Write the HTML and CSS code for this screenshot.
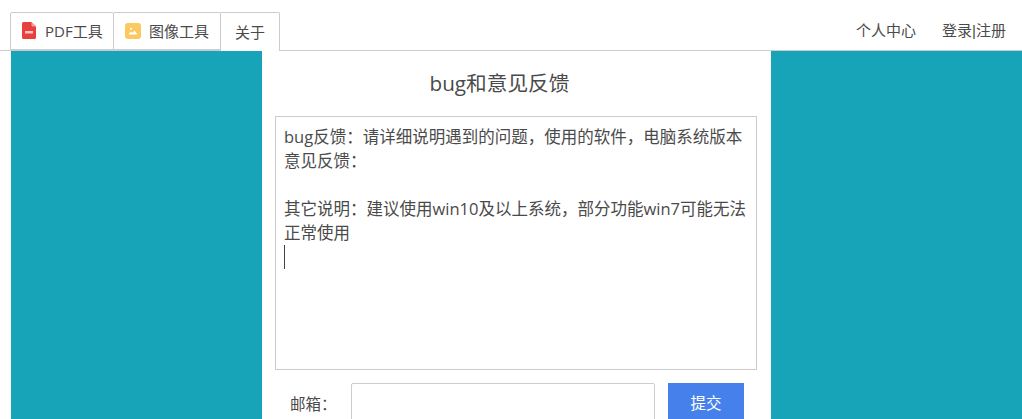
FILE: index.html
```html
<!DOCTYPE html>
<html lang="zh">
<head>
<meta charset="utf-8">
<title>bug和意见反馈</title>
<link rel="stylesheet" href="styles.css">
</head>
<body>
<header class="topbar">
  <nav class="tabs">
    <div class="tab tab-pdf">
      <svg class="tab-icon" viewBox="0 0 14 17" width="14" height="17"><path d="M1.500 0H9.500l4.500 4.500v11a1.500 1.500 0 0 1-1.500 1.500h-11A1.500 1.500 0 0 1 0 15.500v-14A1.500 1.500 0 0 1 1.500 0z" fill="#e8403f"/><path d="M9.500 0L14 4.500H10.500a1 1 0 0 1-1-1z" fill="#f3a09f"/><rect x="3" y="9" width="8" height="2.500" fill="#f8c6c5"/></svg>
      <span>PDF工具</span>
    </div>
    <div class="tab tab-image">
      <svg class="tab-icon" viewBox="0 0 16 16" width="16" height="16"><rect width="16" height="16" rx="3" fill="#fcc860"/><path d="M3.500 11.500l2.500-3 1.500 1.500 2-2.500 3 4z" fill="#fff"/><circle cx="6" cy="5.800" r="1.100" fill="#fff"/></svg>
      <span>图像工具</span>
    </div>
    <div class="tab tab-active"><span>关于</span></div>
  </nav>
  <div class="user-links">
    <span>个人中心</span>
    <span>登录|注册</span>
  </div>
</header>
<main class="stage">
  <section class="panel">
    <h1 class="title">bug和意见反馈</h1>
    <div class="editor">
      <p>bug反馈：请详细说明遇到的问题，使用的软件，电脑系统版本</p>
      <p>意见反馈：</p>
      <p>&nbsp;</p>
      <p>其它说明：建议使用win10及以上系统，部分功能win7可能无法正常使用</p>
      <p><span class="caret"></span></p>
    </div>
    <div class="form-row">
      <label class="email-label">邮箱：</label>
      <div class="email-input"></div>
      <div class="submit">提交</div>
    </div>
  </section>
</main>
</body>
</html>
```
FILE: styles.css
```css
* { box-sizing: border-box; }
html, body { margin: 0; height: 100%; overflow: hidden; background: #fff; }
body {
  font-family: "Open Sans", "Noto Sans CJK SC", sans-serif;
  font-size: 15px;
  color: #4a4a4a;
  padding-top: 12px;
}
.topbar {
  height: 39px;
  padding-left: 10px;
  display: flex;
  justify-content: space-between;
  border-bottom: 1px solid #ccc;
}
.tabs { display: flex; height: 39px; }
.tab {
  display: flex;
  align-items: center;
  gap: 9px;
  height: 38px;
  padding-bottom: 1px;
  border: 1px solid #ccc;
  border-radius: 2px 2px 0 0;
  background: #fff;
}
.tab-pdf { width: 104px; padding-left: 11px; }
.tab-image { width: 108px; padding-left: 11px; margin-left: -1px; gap: 8px; }
.tab-active { width: 60px; padding: 0 0 2px 14px; height: 39px; border-bottom: none; margin-left: -1px; }
.user-links {
  display: flex;
  gap: 26px;
  padding: 10px 16px 0 0;
  line-height: 18px;
  font-family: "Liberation Sans", "Noto Sans CJK SC", sans-serif;
}
.stage {
  margin-left: 11px;
  height: 368px;
  background: #17a3b8;
  display: flex;
  justify-content: center;
}
.panel {
  width: 509px;
  background: #fff;
  padding: 0 14px 0 13px;
}
.title {
  margin: 0;
  height: 65px;
  padding: 19px 33px 0 0;
  font-size: 20.7px;
  font-weight: 400;
  line-height: 27px;
  text-align: center;
}
.editor {
  height: 254px;
  border: 1px solid #ccc;
  padding: 8px 8px;
  font-size: 16.5px;
  line-height: 24px;
}
.editor p { margin: 0; }
.caret {
  display: inline-block;
  width: 1px;
  height: 24px;
  background: #444;
  vertical-align: top;
}
.form-row {
  display: flex;
  align-items: flex-start;
  margin-top: 13px;
}
.email-label { width: 76px; padding: 11px 0 0 15px; font-size: 15.5px; line-height: 20px; }
.email-input {
  width: 304px;
  height: 40px;
  border: 1px solid #ccc;
  border-radius: 2px;
}
.submit {
  margin-left: 13px;
  width: 76px;
  height: 40px;
  background: #4680ea;
  color: #fff;
  text-align: center;
  line-height: 40px;
  font-size: 15.5px;
}
```
